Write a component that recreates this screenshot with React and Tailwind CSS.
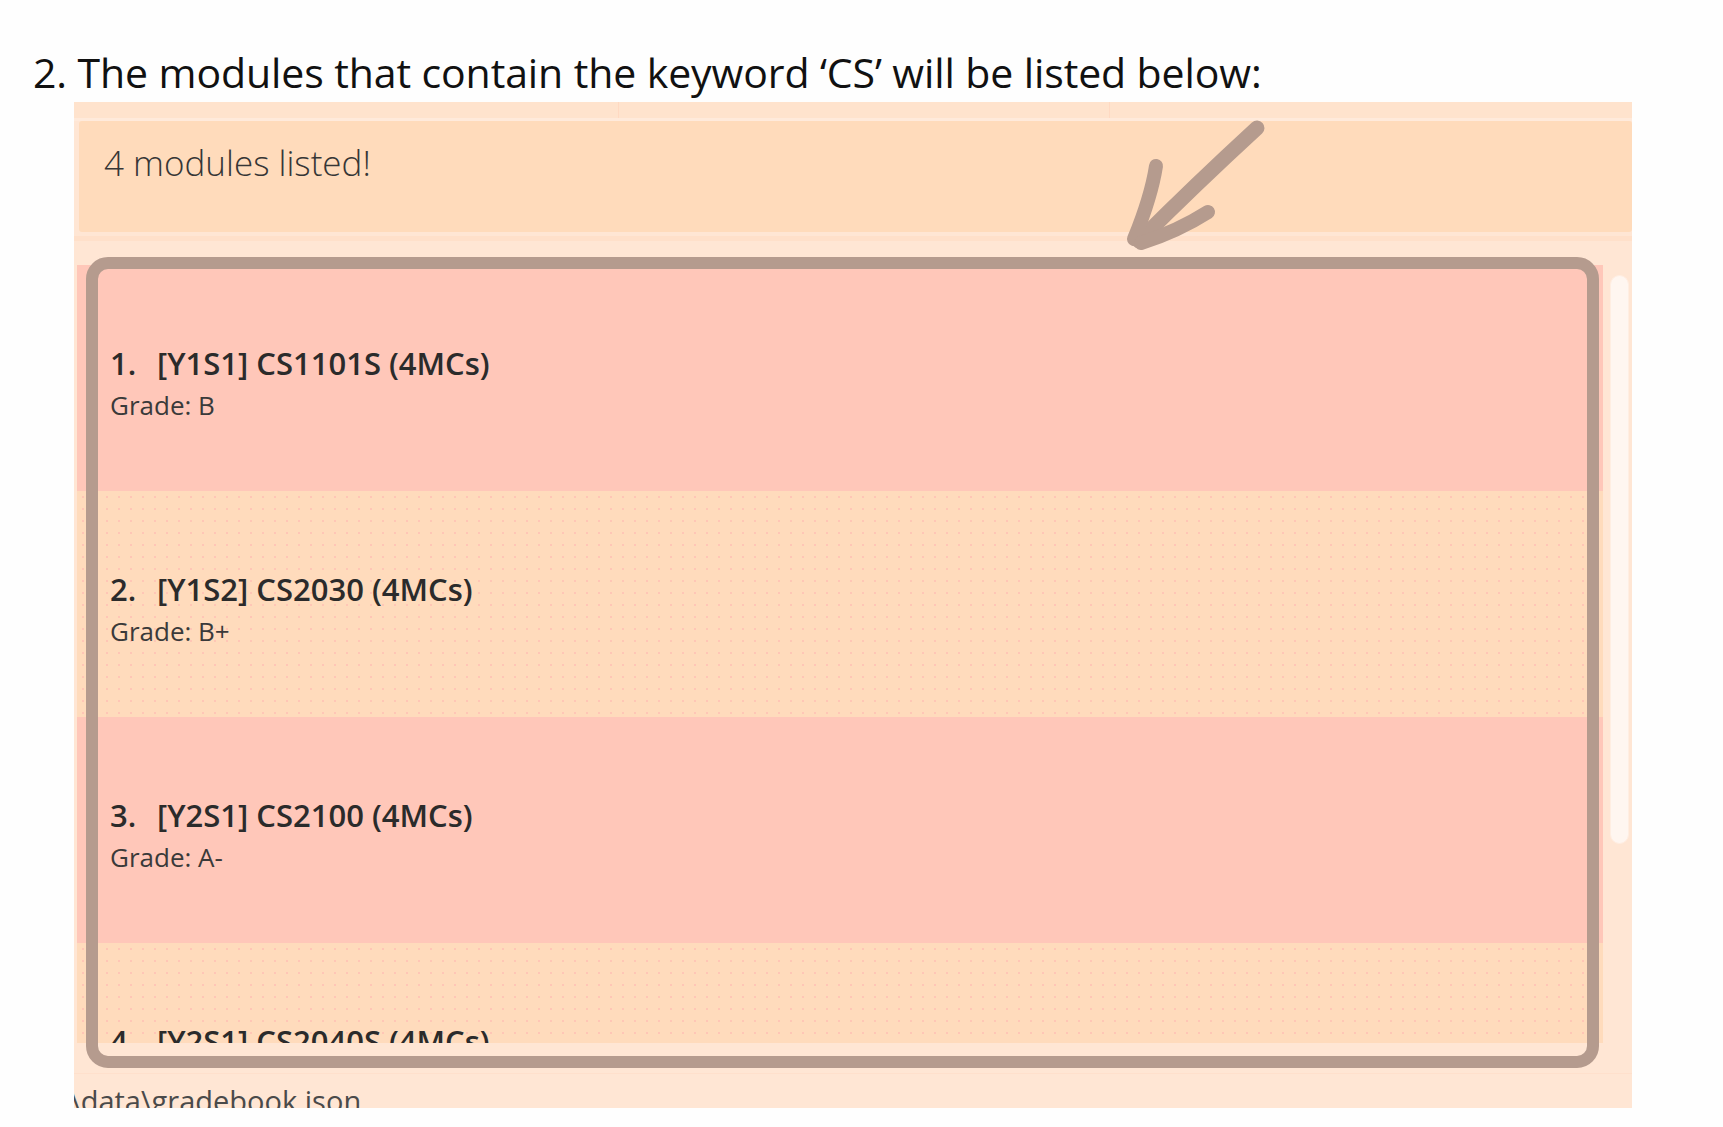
const modules = [
  { no: '1.', title: '[Y1S1] CS1101S (4MCs)', grade: 'B', tone: 'pink' },
  { no: '2.', title: '[Y1S2] CS2030 (4MCs)', grade: 'B+', tone: 'peach' },
  { no: '3.', title: '[Y2S1] CS2100 (4MCs)', grade: 'A-', tone: 'pink' },
  { no: '4.', title: '[Y2S1] CS2040S (4MCs)', grade: 'B', tone: 'peach' },
];

function ModuleCard({ mod }) {
  const bg =
    mod.tone === 'pink'
      ? 'bg-[#ffc7b9]'
      : 'bg-[#ffdbbc] bg-[radial-gradient(circle,#ffc6b6_1px,transparent_1.4px)] bg-[size:12px_12px]';
  return (
    <div className={`h-[226px] shrink-0 pl-[33px] pt-[80px] ${bg}`}>
      <div className="flex text-[31px] leading-[36px] font-semibold text-[#2b2b2b]">
        <span className="w-[47px]">{mod.no}</span>
        <span>{mod.title}</span>
      </div>
      <div className="mt-[9px] text-[26px] leading-[30px] text-[#3a3a3a]">Grade: {mod.grade}</div>
    </div>
  );
}

function Arrow() {
  return (
    <svg
      className="absolute left-[1110px] top-[110px]"
      width="170"
      height="150"
      viewBox="1110 110 170 150"
      fill="none"
      stroke="#b59b8e"
      strokeLinecap="round"
      strokeLinejoin="round"
    >
      <path d="M1257 128 C1220 162 1176 204 1139 241" strokeWidth="15" />
      <path d="M1156 166 C1152 192 1143 217 1134 239" strokeWidth="14" />
      <path d="M1208 212 C1186 226 1163 236 1141 243" strokeWidth="14" />
    </svg>
  );
}

export default function App() {
  return (
    <div
      className="relative w-[1723px] h-[1127px] overflow-hidden bg-[#fefefe]"
      style={{ fontFamily: '"Open Sans", "Noto Sans", sans-serif' }}
    >
      <h1 className="pt-[48px] pl-[33px] text-[41px] leading-[48px] tracking-[-0.1px] text-[#111] font-normal">
        2. The modules that contain the keyword ‘CS’ will be listed below:
      </h1>

      <div className="mt-[6px] ml-[74px] w-[1558px] h-[1006px] flex flex-col overflow-hidden bg-[#ffe6d4]">
        {/* tab strip */}
        <div className="flex h-[19px] shrink-0 bg-[#ffe3cd] border-b-[3px] border-[#ffeadb]">
          <div className="w-[545px] border-r border-[#ffd9c2]" />
          <div className="w-[491px] border-r border-[#ffd9c2]" />
          <div className="flex-1" />
        </div>

        {/* result box */}
        <div className="ml-[5px] h-[111px] shrink-0 rounded-[3px] bg-[#ffdbbb] pl-[25px] pt-[20px]">
          <p className="text-[35px] leading-[44px] font-light text-[#363636]">4 modules listed!</p>
        </div>

        <div className="h-[33px] shrink-0 pt-[4px]">
          <div className="h-[5px] bg-[#ffe0ca]" />
        </div>

        {/* list */}
        <div className="flex h-[778px] shrink-0">
          <div className="ml-[3px] w-[1526px] flex flex-col overflow-hidden">
            {modules.map((m) => (
              <ModuleCard key={m.no} mod={m} />
            ))}
          </div>
          <div className="flex-1 pl-[7px] pt-[10px]">
            <div className="w-[19px] h-[569px] rounded-full bg-[#fff6f0] border border-[#ffeee2]" />
          </div>
        </div>

        {/* status bar */}
        <div className="h-[30px] shrink-0" />
        <div className="flex-1 overflow-hidden border-t border-[#ffe0cc] pt-[10px]">
          <p className="-ml-[4px] text-[29px] leading-[34px] text-[#4a4a4a] whitespace-nowrap">\data\gradebook.json</p>
        </div>
      </div>

      {/* hand-drawn highlight over the list */}
      <div className="absolute left-[86px] top-[257px] w-[1513px] h-[811px] rounded-[22px] border-[12px] border-[#b59b8e]" />
      <Arrow />
    </div>
  );
}
